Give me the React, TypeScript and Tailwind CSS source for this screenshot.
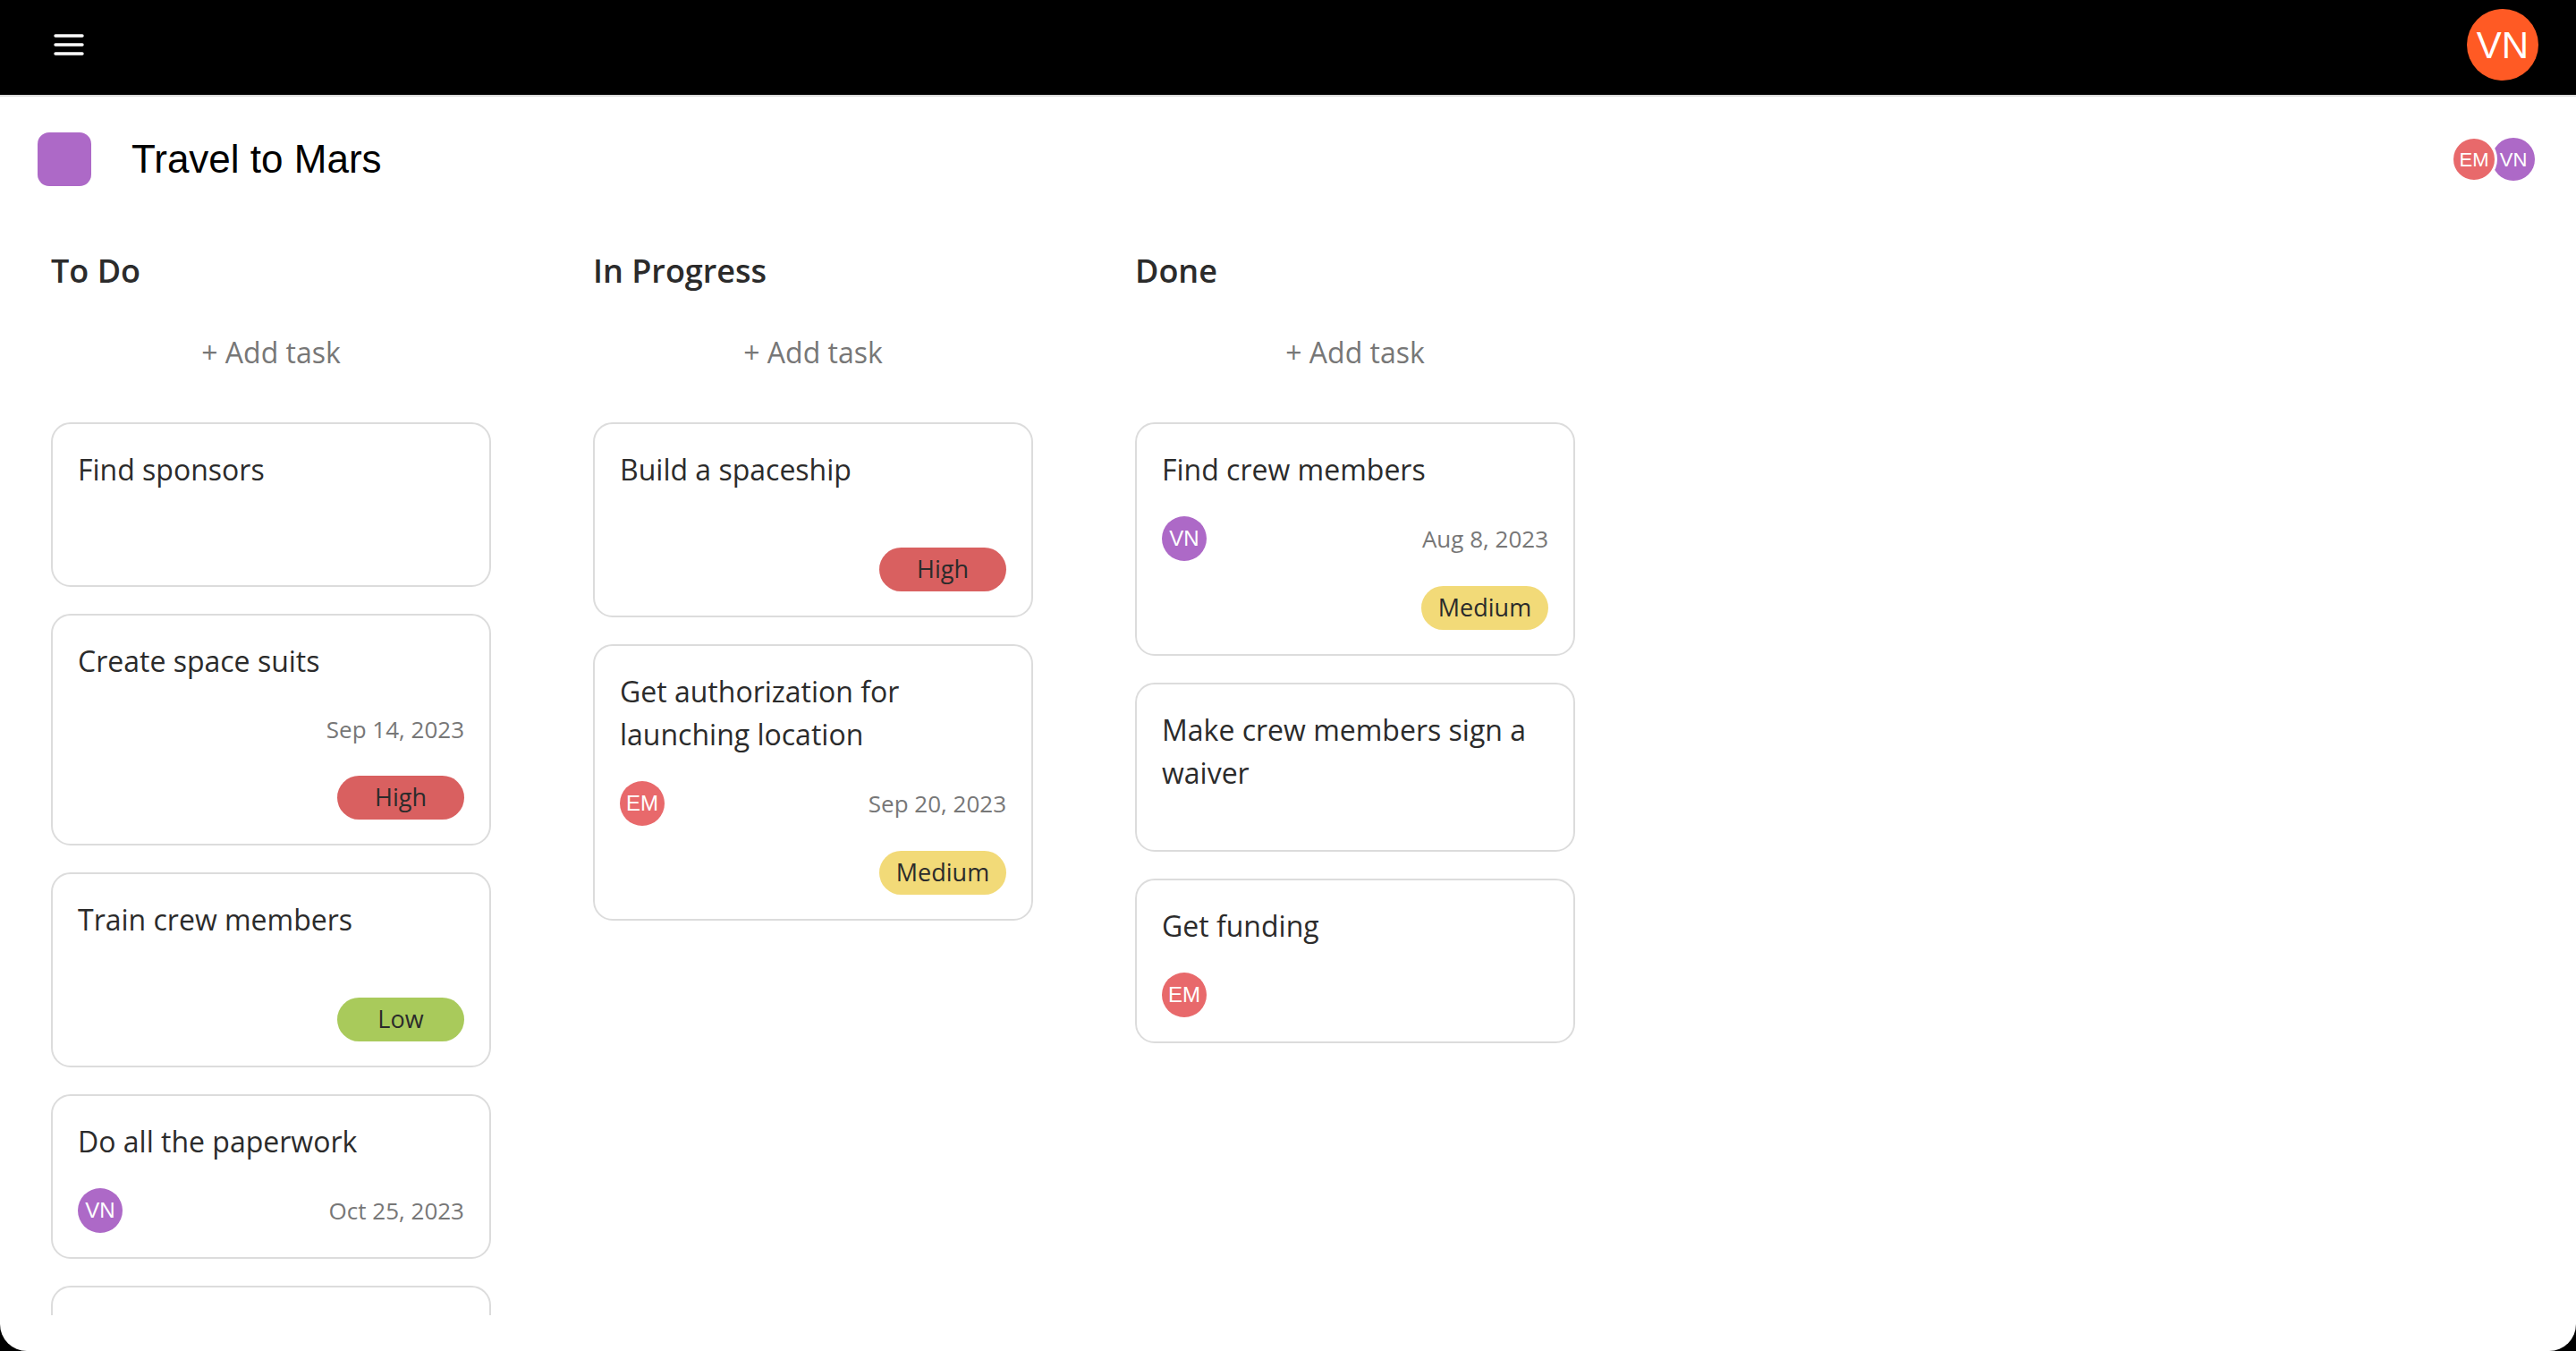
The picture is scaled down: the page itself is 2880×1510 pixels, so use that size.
type Priority = "High" | "Medium" | "Low";
type User = "EM" | "VN";

interface Task {
  title: string;
  user?: User;
  date?: string;
  priority?: Priority;
}

interface Column {
  name: string;
  tasks: Task[];
}

const columns: Column[] = [
  {
    name: "To Do",
    tasks: [
      { title: "Find sponsors" },
      { title: "Create space suits", date: "Sep 14, 2023", priority: "High" },
      { title: "Train crew members", priority: "Low" },
      { title: "Do all the paperwork", user: "VN", date: "Oct 25, 2023" },
      { title: "Plan the launch" },
    ],
  },
  {
    name: "In Progress",
    tasks: [
      { title: "Build a spaceship", priority: "High" },
      {
        title: "Get authorization for launching location",
        user: "EM",
        date: "Sep 20, 2023",
        priority: "Medium",
      },
    ],
  },
  {
    name: "Done",
    tasks: [
      { title: "Find crew members", user: "VN", date: "Aug 8, 2023", priority: "Medium" },
      { title: "Make crew members sign a waiver" },
      { title: "Get funding", user: "EM" },
    ],
  },
];

const badgeColors: Record<Priority, string> = {
  High: "bg-[#d96060]",
  Medium: "bg-[#f2da78]",
  Low: "bg-[#a9ca5b]",
};

const userColors: Record<User, string> = {
  EM: "bg-[#e8696b]",
  VN: "bg-[#ad69c7]",
};

const Avatar = ({ user }: { user: User }) => (
  <div
    className={`w-[50px] h-[50px] rounded-full flex items-center justify-center text-white text-[24px] font-['Liberation_Sans',Arial,sans-serif] ${userColors[user]}`}
  >
    {user}
  </div>
);

const TaskCard = ({ task }: { task: Task }) => {
  const { title, user, date, priority } = task;
  // meta row keeps a small placeholder height even when empty
  const metaHeight = user ? "h-[50px]" : date ? "h-[48px]" : "h-[7px]";
  return (
    <div className="min-h-[184px] shrink-0 rounded-[22px] border-2 border-[#dcdcdc] bg-white px-[28px] py-[27px] flex flex-col">
      <p className="text-[32px] leading-[48px] text-[#2b2b2b]">{title}</p>
      {(user || date || priority) && (
        <div className={`mt-[28px] flex items-center justify-between ${metaHeight}`}>
          {user ? <Avatar user={user} /> : <span />}
          {date && <span className="text-[26px] text-[#777777]">{date}</span>}
        </div>
      )}
      {priority && (
        <div className="mt-[28px] flex justify-end">
          <span
            className={`w-[142px] h-[49px] rounded-full flex items-center justify-center text-[27px] text-[#2b2b2b] ${badgeColors[priority]}`}
          >
            {priority}
          </span>
        </div>
      )}
      {!user && !date && !priority && <div className="mt-[28px] h-[7px]" />}
    </div>
  );
};

const BoardColumn = ({ column }: { column: Column }) => (
  <div className="w-[492px] shrink-0 flex flex-col">
    <h2 className="text-[36px] leading-[54px] font-semibold text-[#2b2b2b]">{column.name}</h2>
    <button className="mt-[40px] text-[32px] leading-[48px] text-[#777777] text-center">
      + Add task
    </button>
    <div className="mt-[54px] flex flex-col gap-[30px]">
      {column.tasks.map((task) => (
        <TaskCard key={task.title} task={task} />
      ))}
    </div>
  </div>
);

export default function App() {
  return (
    <div className="h-[1510px] w-full bg-black">
      <div className="h-full flex flex-col bg-white rounded-b-[30px] overflow-hidden font-['Open_Sans',sans-serif]">
        <header className="h-[108px] shrink-0 bg-black border-b-2 border-[#dcdcdc] pb-[6px] px-[42px] flex items-center justify-between">
          <svg width="34" height="24" viewBox="0 0 34 24" className="ml-[18px]">
            <g stroke="white" strokeWidth="3.4" strokeLinecap="round">
              <line x1="2" y1="2" x2="32" y2="2" />
              <line x1="2" y1="12" x2="32" y2="12" />
              <line x1="2" y1="22" x2="32" y2="22" />
            </g>
          </svg>
          <div className="w-[80px] h-[80px] rounded-full bg-[#ff5a24] flex items-center justify-center text-white text-[42px] font-['Liberation_Sans',Arial,sans-serif]">
            VN
          </div>
        </header>

        <div className="shrink-0 mt-[40px] h-[60px] pl-[42px] pr-[46px] flex items-center justify-between">
          <div className="flex items-center gap-[45px]">
            <div className="w-[60px] h-[60px] rounded-[13px] bg-[#ad69c7]" />
            <h1 className="text-[44px] text-black font-['Liberation_Sans',Arial,sans-serif]">
              Travel to Mars
            </h1>
          </div>
          <div className="flex items-center">
            <div className="relative z-10 w-[52px] h-[52px] rounded-full border-[3px] border-white bg-[#e8696b] flex items-center justify-center text-white text-[22px] font-['Liberation_Sans',Arial,sans-serif]">
              EM
            </div>
            <div className="-ml-[6px] w-[48px] h-[48px] rounded-full bg-[#ad69c7] flex items-center justify-center text-white text-[22px] font-['Liberation_Sans',Arial,sans-serif]">
              VN
            </div>
          </div>
        </div>

        <div className="flex-1 min-h-0 overflow-hidden mt-[68px] pl-[57px] flex gap-[114px] items-start">
          {columns.map((column) => (
            <BoardColumn key={column.name} column={column} />
          ))}
        </div>
        <div className="h-[40px] shrink-0" />
      </div>
    </div>
  );
}
